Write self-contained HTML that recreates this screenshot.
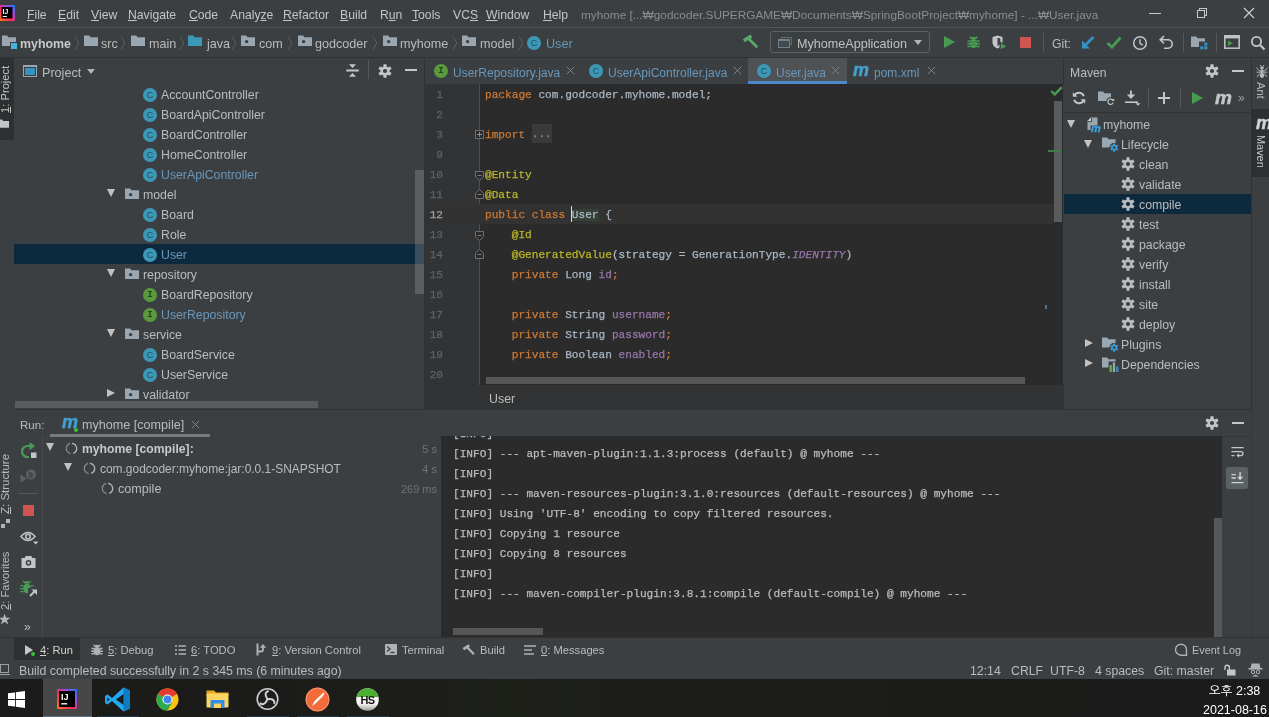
<!DOCTYPE html><html><head><meta charset="utf-8"><title>myhome - User.java</title><style>
*{box-sizing:border-box}
html,body{margin:0;padding:0}
body{width:1269px;height:717px;position:relative;overflow:hidden;background:#3c3f41;will-change:transform;font-family:"Liberation Sans","NanumGothic",sans-serif;font-size:12.3px;color:#bbbbbb;line-height:20px}
.a{position:absolute;white-space:nowrap}
.t{position:absolute;white-space:nowrap;height:20px;line-height:22px}
.mono{font-family:"Liberation Mono",monospace;font-size:11.13px;-webkit-text-stroke:0.250px currentColor}
.row{position:absolute;left:0;right:0;height:20px}
.ic{position:absolute;display:block}
.circ{position:absolute;width:14px;height:14px;border-radius:50%;font-family:"Liberation Sans",sans-serif;font-size:9px;text-align:center;line-height:14px;color:#1f4a5a}
.cc{background:#3d98b8}
.ci{background:#5a9a3c;color:#25401a}
.blue{color:#6897bb}
.kw{color:#cc7832}.an{color:#bbb529}.fd{color:#9876aa}.cd{color:#a9b7c6}
u{text-decoration:underline;text-underline-offset:1px}
</style></head><body>
<div class="a" style="left:0;top:0;width:1269px;height:27px;background:#3c3f41"></div>
<svg class="ic" style="left:-1px;top:5px" width="16" height="16" viewBox="0 0 16 16"><defs><linearGradient id="ijg" x1="0" y1="1" x2="1" y2="0"><stop offset="0" stop-color="#fc801d"/><stop offset=".4" stop-color="#fe2857"/><stop offset=".7" stop-color="#a34be0"/><stop offset="1" stop-color="#087cfa"/></linearGradient></defs><rect width="16" height="16" rx="1" fill="url(#ijg)"/><rect x="2.500" y="2" width="11" height="11.500" fill="#000"/><rect x="3.800" y="11" width="4" height="1" fill="#fff"/><text x="3.500" y="8.800" font-family="Liberation Sans" font-weight="bold" font-size="6.800" fill="#fff">IJ</text></svg>
<div class="t" style="left:27px;top:4px;font-size:12.2px;color:#c4c4c4"><u>F</u>ile</div>
<div class="t" style="left:58px;top:4px;font-size:12.2px;color:#c4c4c4"><u>E</u>dit</div>
<div class="t" style="left:91px;top:4px;font-size:12.2px;color:#c4c4c4"><u>V</u>iew</div>
<div class="t" style="left:128px;top:4px;font-size:12.2px;color:#c4c4c4"><u>N</u>avigate</div>
<div class="t" style="left:189px;top:4px;font-size:12.2px;color:#c4c4c4"><u>C</u>ode</div>
<div class="t" style="left:230px;top:4px;font-size:12.2px;color:#c4c4c4">Analy<u>z</u>e</div>
<div class="t" style="left:283px;top:4px;font-size:12.2px;color:#c4c4c4"><u>R</u>efactor</div>
<div class="t" style="left:340px;top:4px;font-size:12.2px;color:#c4c4c4"><u>B</u>uild</div>
<div class="t" style="left:380px;top:4px;font-size:12.2px;color:#c4c4c4">R<u>u</u>n</div>
<div class="t" style="left:412px;top:4px;font-size:12.2px;color:#c4c4c4"><u>T</u>ools</div>
<div class="t" style="left:453px;top:4px;font-size:12.2px;color:#c4c4c4">VC<u>S</u></div>
<div class="t" style="left:486px;top:4px;font-size:12.2px;color:#c4c4c4"><u>W</u>indow</div>
<div class="t" style="left:543px;top:4px;font-size:12.2px;color:#c4c4c4"><u>H</u>elp</div>
<div class="t" style="left:581px;top:4px;font-size:11.800px;color:#8a8c8d">myhome [...₩godcoder.SUPERGAME₩Documents₩SpringBootProject₩myhome] - ...₩User.java</div>
<div class="a" style="left:1149px;top:13px;width:12px;height:1px;background:#c8c8c8"></div>
<div class="a" style="left:1199px;top:8px;width:8px;height:8px;border:1px solid #c8c8c8"></div><div class="a" style="left:1197px;top:10px;width:8px;height:8px;border:1px solid #c8c8c8;background:#3c3f41"></div>
<svg class="ic" style="left:1243px;top:7px" width="12" height="12" viewBox="0 0 12 12"><path d="M1 1L11 11M11 1L1 11" stroke="#d0d0d0" stroke-width="1.1" fill="none"/></svg>
<div class="a" style="left:0;top:27px;width:1269px;height:1px;background:#515355"></div>
<svg class="ic" style="left:2px;top:35px" width="14" height="11" viewBox="0 0 14 11"><path d="M0 0.5h5.2l1.3 1.8H14V11H0z" fill="#9aa7b0"/></svg><div class="a" style="left:10px;top:42px;width:8px;height:8px;background:#40b6e0;border:1px solid #3c3f41"></div>
<div class="t" style="left:20px;top:33px;font-weight:bold;font-size:12.4px;color:#c8c8c8">myhome</div>
<svg class="ic" style="left:73.5px;top:36px" width="6" height="14" viewBox="0 0 6 14"><path d="M1 0.500L4.800 7L1 13.500" stroke="#5c5f61" stroke-width="1" fill="none"/></svg>
<svg class="ic" style="left:120px;top:36px" width="6" height="14" viewBox="0 0 6 14"><path d="M1 0.500L4.800 7L1 13.500" stroke="#5c5f61" stroke-width="1" fill="none"/></svg>
<svg class="ic" style="left:178.5px;top:36px" width="6" height="14" viewBox="0 0 6 14"><path d="M1 0.500L4.800 7L1 13.500" stroke="#5c5f61" stroke-width="1" fill="none"/></svg>
<svg class="ic" style="left:231px;top:36px" width="6" height="14" viewBox="0 0 6 14"><path d="M1 0.500L4.800 7L1 13.500" stroke="#5c5f61" stroke-width="1" fill="none"/></svg>
<svg class="ic" style="left:287px;top:36px" width="6" height="14" viewBox="0 0 6 14"><path d="M1 0.500L4.800 7L1 13.500" stroke="#5c5f61" stroke-width="1" fill="none"/></svg>
<svg class="ic" style="left:372px;top:36px" width="6" height="14" viewBox="0 0 6 14"><path d="M1 0.500L4.800 7L1 13.500" stroke="#5c5f61" stroke-width="1" fill="none"/></svg>
<svg class="ic" style="left:452px;top:36px" width="6" height="14" viewBox="0 0 6 14"><path d="M1 0.500L4.800 7L1 13.500" stroke="#5c5f61" stroke-width="1" fill="none"/></svg>
<svg class="ic" style="left:517.5px;top:36px" width="6" height="14" viewBox="0 0 6 14"><path d="M1 0.500L4.800 7L1 13.500" stroke="#5c5f61" stroke-width="1" fill="none"/></svg>
<svg class="ic" style="left:84px;top:35px" width="14" height="11" viewBox="0 0 14 11"><path d="M0 0.5h5.2l1.3 1.8H14V11H0z" fill="#9aa7b0"/></svg>
<div class="t" style="left:101px;top:33px;font-size:12.6px">src</div>
<svg class="ic" style="left:131px;top:35px" width="14" height="11" viewBox="0 0 14 11"><path d="M0 0.5h5.2l1.3 1.8H14V11H0z" fill="#9aa7b0"/></svg>
<div class="t" style="left:149px;top:33px;font-size:12.6px">main</div>
<svg class="ic" style="left:188px;top:35px" width="14" height="11" viewBox="0 0 14 11"><path d="M0 0.5h5.2l1.3 1.8H14V11H0z" fill="#3d98b8"/></svg>
<div class="t" style="left:207px;top:33px;font-size:12.6px">java</div>
<svg class="ic" style="left:241px;top:35px" width="14" height="11" viewBox="0 0 14 11"><path d="M0 0.5h5.2l1.3 1.8H14V11H0z" fill="#9aa7b0"/><circle cx="5.6" cy="6.6" r="1.7" fill="#3c3f41"/></svg>
<div class="t" style="left:259px;top:33px;font-size:12.6px">com</div>
<svg class="ic" style="left:298px;top:35px" width="14" height="11" viewBox="0 0 14 11"><path d="M0 0.5h5.2l1.3 1.8H14V11H0z" fill="#9aa7b0"/><circle cx="5.6" cy="6.6" r="1.7" fill="#3c3f41"/></svg>
<div class="t" style="left:315px;top:33px;font-size:12.6px">godcoder</div>
<svg class="ic" style="left:383px;top:35px" width="14" height="11" viewBox="0 0 14 11"><path d="M0 0.5h5.2l1.3 1.8H14V11H0z" fill="#9aa7b0"/><circle cx="5.6" cy="6.6" r="1.7" fill="#3c3f41"/></svg>
<div class="t" style="left:400px;top:33px;font-size:12.6px">myhome</div>
<svg class="ic" style="left:462px;top:35px" width="14" height="11" viewBox="0 0 14 11"><path d="M0 0.5h5.2l1.3 1.8H14V11H0z" fill="#9aa7b0"/><circle cx="5.6" cy="6.6" r="1.7" fill="#3c3f41"/></svg>
<div class="t" style="left:480px;top:33px;font-size:12.6px">model</div>
<div class="circ cc" style="left:527px;top:36px">C</div>
<div class="t blue" style="left:546px;top:33px;font-size:12.6px">User</div>
<svg class="ic" style="left:742px;top:33px" width="18" height="18" viewBox="0 0 18 18"><path d="M1.800 7.800L9.400 3" stroke="#59a869" stroke-width="3.600"/><path d="M6.200 5.200L15.300 14.300" stroke="#59a869" stroke-width="2.800"/></svg>
<div class="a" style="left:770px;top:31px;width:160px;height:22px;border:1px solid #5e6163;border-radius:3px"></div>
<div class="a" style="left:781px;top:37px;width:11px;height:8px;border:1px solid #5d6f73;background:#3c3f41"></div><div class="a" style="left:778px;top:39px;width:12px;height:9px;border:1px solid #6e8388;border-top-width:2px;background:#3f4a4d"></div>
<div class="t" style="left:797px;top:33px;font-size:12.6px;color:#c0c0c0">MyhomeApplication</div>
<div class="a" style="left:914px;top:40px;width:0;height:0;border-left:4.5px solid transparent;border-right:4.5px solid transparent;border-top:5px solid #b4b4b4"></div>
<div class="a" style="left:944px;top:36px;width:0;height:0;border-top:6.5px solid transparent;border-bottom:6.5px solid transparent;border-left:11px solid #499c54"></div>
<svg class="ic" style="left:967px;top:36px" width="13" height="13" viewBox="0 0 15 15"><g fill="#499c54"><ellipse cx="7.500" cy="8.800" rx="4.300" ry="5.200"/><path d="M4.300 3.800a3.200 2.800 0 0 1 6.400 0z"/><path d="M0.600 4.800h3.600v1.900h-3.600zM10.800 4.800h3.600v1.900h-3.600zM0.200 8h3.600v1.900H0.200zM11.200 8h3.600v1.900h-3.600zM0.600 11.200h3.600v1.900h-3.600zM10.800 11.200h3.600v1.900h-3.600zM3.800 0.300l2 2.200-1.200 1-2-2.200zM11.200 0.300l-2 2.200 1.200 1 2-2.200z"/></g><path d="M4 6.700h7v0.900H4zM4 9.700h7v0.900H4z" fill="#3c3f41" opacity=".6"/></svg>
<svg class="ic" style="left:992px;top:35px" width="17" height="17" viewBox="0 0 17 17"><path d="M0.500 2L5.500 0.500L10.500 2V8q-0.500 3.500-5 5.500Q1 11.500 0.500 8z" fill="#c3c6c8"/><path d="M5.500 2.800L8.300 3.600V8q-0.300 1.800-2.800 3.200z" fill="#3c3f41"/><path d="M7.500 6.300l8.500 4.800-8.500 4.900z" fill="#3c3f41"/><path d="M8.800 8.200l5.500 3-5.500 3.100z" fill="#499c54"/></svg>
<div class="a" style="left:1020px;top:37px;width:11px;height:11px;background:#cf5551"></div>
<div class="a" style="left:1043px;top:33px;width:1px;height:19px;background:#555759"></div>
<div class="t" style="left:1052px;top:33px;font-size:12.200px">Git:</div>
<svg class="ic" style="left:1081px;top:36px" width="14" height="13" viewBox="0 0 14 13"><path d="M12.500 1L4.500 9" stroke="#3592c4" stroke-width="2.600" fill="none"/><path d="M1 4.500V12.500H9z" fill="#3592c4"/></svg>
<svg class="ic" style="left:1106px;top:36px" width="16" height="13" viewBox="0 0 16 13"><path d="M1.5 7L6 11.2L14.5 1.5" stroke="#499c54" stroke-width="2.700" fill="none"/></svg>
<svg class="ic" style="left:1132px;top:35px" width="16" height="16" viewBox="0 0 16 16"><circle cx="8" cy="8" r="6.3" stroke="#c3c6c8" stroke-width="1.5" fill="none"/><path d="M8 4.2V8.3l2.8 1.8" stroke="#c3c6c8" stroke-width="1.4" fill="none"/></svg>
<svg class="ic" style="left:1159px;top:35px" width="15" height="15" viewBox="0 0 15 15"><path d="M1.5 4.8H9a4.2 4.2 0 0 1 0 8.4H5" stroke="#c3c6c8" stroke-width="1.6" fill="none"/><path d="M5 1.2L1.2 4.8L5 8.4" stroke="#c3c6c8" stroke-width="1.6" fill="none"/></svg>
<div class="a" style="left:1183px;top:33px;width:1px;height:19px;background:#555759"></div>
<svg class="ic" style="left:1191px;top:36px" width="17" height="14" viewBox="0 0 17 14"><path d="M0 0.5h5.2l1.3 1.8H14V11H0z" fill="#9aa7b0"/><rect x="8" y="5.5" width="9" height="8.5" fill="#3c3f41"/><rect x="9.3" y="10.3" width="3" height="3" fill="#3592c4"/><rect x="13.3" y="10.3" width="3" height="3" fill="#3592c4"/><rect x="13.3" y="6.6" width="3" height="3" fill="#3592c4"/></svg>
<div class="a" style="left:1216px;top:33px;width:1px;height:19px;background:#555759"></div>
<svg class="ic" style="left:1224px;top:35px" width="16" height="14" viewBox="0 0 16 14"><rect x="0.8" y="0.8" width="14.4" height="12.4" fill="none" stroke="#c3c6c8" stroke-width="1.5"/><rect x="0.8" y="0.8" width="14.4" height="2.6" fill="#c3c6c8"/><path d="M4 5.6l4.6 2.7L4 11z" fill="#499c54"/></svg>
<svg class="ic" style="left:1250px;top:35px" width="16" height="16" viewBox="0 0 16 16"><circle cx="6.5" cy="6.5" r="4.6" stroke="#c3c6c8" stroke-width="1.8" fill="none"/><path d="M9.8 9.8L14.5 14.5" stroke="#c3c6c8" stroke-width="2.2"/></svg>
<div class="a" style="left:0;top:57px;width:1269px;height:1px;background:#323232"></div>
<div class="a" style="left:0;top:58px;width:14px;height:582px;background:#3c3f41"></div>
<div class="a" style="left:0;top:58px;width:14px;height:82px;background:#2d2f30"></div>
<div class="a" style="left:-2px;top:113px;transform-origin:0 0;transform:rotate(-90deg);font-size:11.2px;line-height:14px;height:14px;color:#c4c4c4"><u>1</u>: Project</div>
<svg class="ic" style="left:-2px;top:119px" width="11" height="9" viewBox="0 0 14 11"><path d="M0 0.500h5.200l1.300 1.800H14V11H0z" fill="#c0c4c6"/></svg>
<div class="a" style="left:-2px;top:514px;transform-origin:0 0;transform:rotate(-90deg);font-size:11.5px;line-height:14px;height:14px;color:#bbbbbb"><u>Z</u>: Structure</div>
<div class="a" style="left:1px;top:524px;width:4px;height:4px;background:#aeb4b8"></div><div class="a" style="left:6px;top:519px;width:4px;height:4px;background:#aeb4b8"></div>
<div class="a" style="left:-2px;top:610px;transform-origin:0 0;transform:rotate(-90deg);font-size:11.2px;line-height:14px;height:14px;color:#bbbbbb"><u>2</u>: Favorites</div>
<div class="a" style="left:-2px;top:609px;font-size:14px;color:#b4b8ba;line-height:20px">★</div>
<div class="a" style="left:14px;top:58px;width:410px;height:351px;background:#3c3f41"></div>
<div class="a" style="left:23px;top:65px;width:14px;height:12px;border:1px solid #9aa7b0;border-top-width:2px;background:#3592c4;box-shadow:inset 0 0 0 1px #3c3f41"></div>
<div class="t" style="left:42px;top:62px;font-size:12.6px">Project</div>
<div class="a" style="left:87px;top:69px;width:0;height:0;border-left:4.5px solid transparent;border-right:4.5px solid transparent;border-top:5px solid #b4b4b4"></div>
<svg class="ic" style="left:346px;top:64px" width="13" height="13" viewBox="0 0 13 13"><path d="M3 0.300h7l-3.500 3.700zM3 12.700h7l-3.500-3.700z" fill="#c3c6c8"/><rect x="0.300" y="5.500" width="12.400" height="2" fill="#c3c6c8"/></svg>
<div class="a" style="left:368px;top:60px;width:1px;height:19px;background:#555759"></div>
<svg class="ic" style="left:378px;top:63.5px" width="14" height="14" viewBox="0 0 14 14"><g fill="#c3c6c8"><circle cx="7" cy="7" r="4.6"/><g><rect x="5.400" y="0.300" width="3.200" height="13.400" rx=".4"/></g><rect x="5.400" y="0.300" width="3.200" height="13.400" rx=".4" transform="rotate(60 7 7)"/><rect x="5.400" y="0.300" width="3.200" height="13.400" rx=".4" transform="rotate(120 7 7)"/></g><circle cx="7" cy="7" r="2.1" fill="#3c3f41"/></svg>
<div class="a" style="left:405px;top:69px;width:12px;height:2px;background:#c3c6c8"></div>
<div class="a" style="left:14px;top:244px;width:410px;height:20px;background:#0d293e"></div>
<div class="circ cc" style="left:143px;top:88px">C</div>
<div class="t" style="left:161px;top:84px;font-size:12.3px">AccountController</div>
<div class="circ cc" style="left:143px;top:108px">C</div>
<div class="t" style="left:161px;top:104px;font-size:12.3px">BoardApiController</div>
<div class="circ cc" style="left:143px;top:128px">C</div>
<div class="t" style="left:161px;top:124px;font-size:12.3px">BoardController</div>
<div class="circ cc" style="left:143px;top:148px">C</div>
<div class="t" style="left:161px;top:144px;font-size:12.3px">HomeController</div>
<div class="circ cc" style="left:143px;top:168px">C</div>
<div class="t blue" style="left:161px;top:164px;font-size:12.3px">UserApiController</div>
<div class="a" style="left:107px;top:189px;width:0;height:0;border-left:4.500px solid transparent;border-right:4.500px solid transparent;border-top:8px solid #c2c2c2"></div>
<svg class="ic" style="left:125px;top:188px" width="14" height="11" viewBox="0 0 14 11"><path d="M0 0.5h5.2l1.3 1.8H14V11H0z" fill="#9aa7b0"/><circle cx="5.6" cy="6.6" r="1.7" fill="#3c3f41"/></svg>
<div class="t" style="left:143px;top:184px;font-size:12.3px">model</div>
<div class="circ cc" style="left:143px;top:208px">C</div>
<div class="t" style="left:161px;top:204px;font-size:12.3px">Board</div>
<div class="circ cc" style="left:143px;top:228px">C</div>
<div class="t" style="left:161px;top:224px;font-size:12.3px">Role</div>
<div class="circ cc" style="left:143px;top:248px">C</div>
<div class="t blue" style="left:161px;top:244px;font-size:12.3px">User</div>
<div class="a" style="left:107px;top:269px;width:0;height:0;border-left:4.500px solid transparent;border-right:4.500px solid transparent;border-top:8px solid #c2c2c2"></div>
<svg class="ic" style="left:125px;top:268px" width="14" height="11" viewBox="0 0 14 11"><path d="M0 0.5h5.2l1.3 1.8H14V11H0z" fill="#9aa7b0"/><circle cx="5.6" cy="6.6" r="1.7" fill="#3c3f41"/></svg>
<div class="t" style="left:143px;top:264px;font-size:12.3px">repository</div>
<div class="circ ci" style="left:143px;top:288px;font-family:'Liberation Mono',monospace;font-weight:bold">I</div>
<div class="t" style="left:161px;top:284px;font-size:12.3px">BoardRepository</div>
<div class="circ ci" style="left:143px;top:308px;font-family:'Liberation Mono',monospace;font-weight:bold">I</div>
<div class="t blue" style="left:161px;top:304px;font-size:12.3px">UserRepository</div>
<div class="a" style="left:107px;top:329px;width:0;height:0;border-left:4.500px solid transparent;border-right:4.500px solid transparent;border-top:8px solid #c2c2c2"></div>
<svg class="ic" style="left:125px;top:328px" width="14" height="11" viewBox="0 0 14 11"><path d="M0 0.5h5.2l1.3 1.8H14V11H0z" fill="#9aa7b0"/><circle cx="5.6" cy="6.6" r="1.7" fill="#3c3f41"/></svg>
<div class="t" style="left:143px;top:324px;font-size:12.3px">service</div>
<div class="circ cc" style="left:143px;top:348px">C</div>
<div class="t" style="left:161px;top:344px;font-size:12.3px">BoardService</div>
<div class="circ cc" style="left:143px;top:368px">C</div>
<div class="t" style="left:161px;top:364px;font-size:12.3px">UserService</div>
<div class="a" style="left:107px;top:388.5px;width:0;height:0;border-top:4.500px solid transparent;border-bottom:4.500px solid transparent;border-left:8px solid #c2c2c2"></div>
<svg class="ic" style="left:125px;top:388px" width="14" height="11" viewBox="0 0 14 11"><path d="M0 0.5h5.2l1.3 1.8H14V11H0z" fill="#9aa7b0"/><circle cx="5.6" cy="6.6" r="1.7" fill="#3c3f41"/></svg>
<div class="t" style="left:143px;top:384px;font-size:12.3px">validator</div>
<div class="a" style="left:14px;top:400px;width:410px;height:9px;background:#3c3f41"></div>
<div class="a" style="left:15px;top:401px;width:303px;height:7px;background:#595b5d"></div>
<div class="a" style="left:415px;top:170px;width:9px;height:124px;background:rgba(175,178,182,0.27)"></div>
<div class="a" style="left:424px;top:58px;width:1px;height:351px;background:#323232"></div>
<div class="a" style="left:425px;top:58px;width:638px;height:26px;background:#3c3f41"></div>
<div class="a" style="left:748px;top:58px;width:99px;height:26px;background:#4e5254"></div>
<div class="a" style="left:748px;top:81px;width:99px;height:3px;background:#4a88c7"></div>
<div class="circ ci" style="left:434px;top:64px;font-family:'Liberation Mono',monospace;font-weight:bold">I</div>
<div class="t blue" style="left:453px;top:62px;font-size:12px">UserRepository.java</div><svg class="ic" style="left:566px;top:66px" width="9" height="9" viewBox="0 0 9 9"><path d="M0.8 0.8L8.2 8.2M8.2 0.8L0.8 8.2" stroke="#7f8385" stroke-width="1" fill="none"/></svg>
<div class="circ cc" style="left:589px;top:64px">C</div>
<div class="t blue" style="left:608px;top:62px;font-size:12px">UserApiController.java</div><svg class="ic" style="left:733px;top:66px" width="9" height="9" viewBox="0 0 9 9"><path d="M0.8 0.8L8.2 8.2M8.2 0.8L0.8 8.2" stroke="#7f8385" stroke-width="1" fill="none"/></svg>
<div class="circ cc" style="left:757px;top:64px">C</div>
<div class="t blue" style="left:776px;top:62px;font-size:12px">User.java</div><svg class="ic" style="left:831px;top:66px" width="9" height="9" viewBox="0 0 9 9"><path d="M0.8 0.8L8.2 8.2M8.2 0.8L0.8 8.2" stroke="#7f8385" stroke-width="1" fill="none"/></svg>
<div class="a" style="left:853px;top:61px;font-family:'Liberation Sans',sans-serif;font-weight:bold;font-style:italic;font-size:18px;line-height:18px;color:#43a0cc;letter-spacing:-0.5px;-webkit-text-stroke:0.500px #43a0cc">m</div>
<div class="t blue" style="left:874px;top:62px;font-size:12px">pom.xml</div><svg class="ic" style="left:927px;top:66px" width="9" height="9" viewBox="0 0 9 9"><path d="M0.8 0.8L8.2 8.2M8.2 0.8L0.8 8.2" stroke="#7f8385" stroke-width="1" fill="none"/></svg>
<div class="a" style="left:425px;top:84px;width:638px;height:301px;background:#2b2b2b;overflow:hidden" id="ed">
<div class="a" style="left:0;top:0;width:54px;height:301px;background:#313335"></div>
<div class="a" style="left:54px;top:0;width:1px;height:301px;background:#4b4d4f"></div>
<div class="a" style="left:0;top:120px;width:629px;height:20px;background:#323232"></div>
<div class="t mono" style="left:0;width:18px;text-align:right;top:0px;color:#606366">1</div>
<div class="t mono cd" style="left:60px;top:0px;white-space:pre"><span class="kw">package </span>com.godcoder.myhome.model;</div>
<div class="t mono" style="left:0;width:18px;text-align:right;top:20px;color:#606366">2</div>
<div class="t mono" style="left:0;width:18px;text-align:right;top:40px;color:#606366">3</div>
<div class="t mono cd" style="left:60px;top:40px;white-space:pre"><span class="kw">import </span><span style="display:inline-block;height:19px;line-height:21px;vertical-align:top;background:#3a3a3a;color:#8c8c8c">...</span></div>
<div class="t mono" style="left:0;width:18px;text-align:right;top:60px;color:#606366">9</div>
<div class="t mono" style="left:0;width:18px;text-align:right;top:80px;color:#606366">10</div>
<div class="t mono cd" style="left:60px;top:80px;white-space:pre"><span class="an">@Entity</span></div>
<div class="t mono" style="left:0;width:18px;text-align:right;top:100px;color:#606366">11</div>
<div class="t mono cd" style="left:60px;top:100px;white-space:pre"><span class="an">@Data</span></div>
<div class="t mono" style="left:0;width:18px;text-align:right;top:120px;color:#a4a3a3">12</div>
<div class="t mono cd" style="left:60px;top:120px;white-space:pre"><span class="kw">public class </span><span style="background:#344134">User</span> {</div>
<div class="t mono" style="left:0;width:18px;text-align:right;top:140px;color:#606366">13</div>
<div class="t mono cd" style="left:60px;top:140px;white-space:pre">    <span class="an">@Id</span></div>
<div class="t mono" style="left:0;width:18px;text-align:right;top:160px;color:#606366">14</div>
<div class="t mono cd" style="left:60px;top:160px;white-space:pre">    <span class="an">@GeneratedValue</span>(strategy = GenerationType.<span class="fd" style="font-style:italic">IDENTITY</span>)</div>
<div class="t mono" style="left:0;width:18px;text-align:right;top:180px;color:#606366">15</div>
<div class="t mono cd" style="left:60px;top:180px;white-space:pre">    <span class="kw">private </span>Long <span class="fd">id</span><span class="kw">;</span></div>
<div class="t mono" style="left:0;width:18px;text-align:right;top:200px;color:#606366">16</div>
<div class="t mono" style="left:0;width:18px;text-align:right;top:220px;color:#606366">17</div>
<div class="t mono cd" style="left:60px;top:220px;white-space:pre">    <span class="kw">private </span>String <span class="fd">username</span><span class="kw">;</span></div>
<div class="t mono" style="left:0;width:18px;text-align:right;top:240px;color:#606366">18</div>
<div class="t mono cd" style="left:60px;top:240px;white-space:pre">    <span class="kw">private </span>String <span class="fd">password</span><span class="kw">;</span></div>
<div class="t mono" style="left:0;width:18px;text-align:right;top:260px;color:#606366">19</div>
<div class="t mono cd" style="left:60px;top:260px;white-space:pre">    <span class="kw">private </span>Boolean <span class="fd">enabled</span><span class="kw">;</span></div>
<div class="t mono" style="left:0;width:18px;text-align:right;top:280px;color:#606366">20</div>
<div class="a" style="left:146px;top:122px;width:1px;height:16px;background:#dddddd"></div>
<div class="a" style="left:50px;top:46px;width:9px;height:9px;border:1px solid #6c6f71;background:#2b2b2b"></div><div class="a" style="left:52px;top:50px;width:5px;height:1px;background:#8c8f91"></div><div class="a" style="left:54px;top:48px;width:1px;height:5px;background:#8c8f91"></div>
<svg class="ic" style="left:50px;top:87px" width="9" height="10" viewBox="0 0 9 10"><path d="M0.5 0.5V6L4.5 9.4L8.5 6V0.5z" fill="#2b2b2b" stroke="#6c6f71"/><path d="M2.5 4.5h4" stroke="#7c7f81"/></svg>
<svg class="ic" style="left:50px;top:105px" width="9" height="10" viewBox="0 0 9 10"><path d="M0.5 9.5V4L4.5 0.6L8.5 4V9.5z" fill="#2b2b2b" stroke="#6c6f71"/><path d="M2.5 5.5h4" stroke="#7c7f81"/></svg>
<svg class="ic" style="left:50px;top:147px" width="9" height="10" viewBox="0 0 9 10"><path d="M0.5 0.5V6L4.5 9.4L8.5 6V0.5z" fill="#2b2b2b" stroke="#6c6f71"/><path d="M2.5 4.5h4" stroke="#7c7f81"/></svg>
<svg class="ic" style="left:50px;top:165px" width="9" height="10" viewBox="0 0 9 10"><path d="M0.5 9.5V4L4.5 0.6L8.5 4V9.5z" fill="#2b2b2b" stroke="#6c6f71"/><path d="M2.5 5.5h4" stroke="#7c7f81"/></svg>
<svg class="ic" style="left:625px;top:2px" width="13" height="10" viewBox="0 0 13 10"><path d="M1.200 5L4.800 8.400L11.800 1.200" stroke="#499c54" stroke-width="2.400" fill="none"/></svg>
<div class="a" style="left:629px;top:17px;width:8px;height:121px;background:#595b5d"></div>
<div class="a" style="left:623px;top:66px;width:13px;height:2px;background:#3f7a4a"></div>
<div class="a" style="left:620px;top:221px;width:2px;height:4px;background:#4a6f98"></div>
<div class="a" style="left:61px;top:293px;width:539px;height:7px;background:#555759"></div>
</div>
<div class="a" style="left:425px;top:385px;width:639px;height:24px;background:#313335"></div>
<div class="t" style="left:489px;top:388px;font-size:12.4px">User</div>
<div class="a" style="left:1063px;top:58px;width:1px;height:26px;background:#323232"></div>
<div class="a" style="left:1064px;top:58px;width:187px;height:351px;background:#3c3f41"></div>
<div class="t" style="left:1070px;top:62px;font-size:12.200px">Maven</div>
<svg class="ic" style="left:1205px;top:63.5px" width="14" height="14" viewBox="0 0 14 14"><g fill="#c3c6c8"><circle cx="7" cy="7" r="4.6"/><g><rect x="5.400" y="0.300" width="3.200" height="13.400" rx=".4"/></g><rect x="5.400" y="0.300" width="3.200" height="13.400" rx=".4" transform="rotate(60 7 7)"/><rect x="5.400" y="0.300" width="3.200" height="13.400" rx=".4" transform="rotate(120 7 7)"/></g><circle cx="7" cy="7" r="2.1" fill="#3c3f41"/></svg>
<div class="a" style="left:1232px;top:69.500px;width:12px;height:2px;background:#c3c6c8"></div>
<svg class="ic" style="left:1072px;top:91px" width="14" height="14" viewBox="0 0 14 14"><path d="M11.8 5.2A5 5 0 0 0 2.6 4.4M2.2 8.8A5 5 0 0 0 11.4 9.6" stroke="#c3c6c8" stroke-width="2" fill="none"/><path d="M0.800 1.200v4.600h4.600zM13.200 12.800v-4.600h-4.600z" fill="#c3c6c8"/></svg>
<svg class="ic" style="left:1098px;top:91px" width="17" height="15" viewBox="0 0 17 15"><path d="M0 0.5h5.2l1.3 1.8H13V10H0z" fill="#9aa7b0"/><circle cx="12.5" cy="10.5" r="4.2" fill="#3c3f41"/><path d="M15 9.4a2.7 2.7 0 1 0 0.2 2.2" stroke="#c3c6c8" stroke-width="1.2" fill="none"/><path d="M16.2 7.4v2.6h-2.6z" fill="#c3c6c8"/></svg>
<svg class="ic" style="left:1124px;top:90px" width="17" height="16" viewBox="0 0 17 16"><path d="M7 0.5V7" stroke="#c3c6c8" stroke-width="1.8"/><path d="M2.8 4.5L7 9L11.2 4.5z" fill="#c3c6c8"/><path d="M1 12.2h13" stroke="#c3c6c8" stroke-width="1.6"/><path d="M11.5 13.2h5L14 15.8z" fill="#c3c6c8"/></svg>
<div class="a" style="left:1148px;top:88px;width:1px;height:20px;background:#555759"></div>
<div class="a" style="left:1158px;top:97px;width:12px;height:2px;background:#c3c6c8"></div><div class="a" style="left:1163px;top:92px;width:2px;height:12px;background:#c3c6c8"></div>
<div class="a" style="left:1180px;top:88px;width:1px;height:20px;background:#555759"></div>
<div class="a" style="left:1192px;top:92px;width:0;height:0;border-top:6.5px solid transparent;border-bottom:6.5px solid transparent;border-left:11px solid #499c54"></div>
<div class="a" style="left:1215px;top:88px;font-family:'Liberation Sans',sans-serif;font-weight:bold;font-style:italic;font-size:19px;line-height:19px;color:#c3c6c8;letter-spacing:-0.5px;-webkit-text-stroke:0.500px #c3c6c8">m</div>
<div class="a" style="left:1238px;top:88px;font-size:12px;color:#9da0a2;line-height:20px">»</div>
<div class="a" style="left:1064px;top:112px;width:187px;height:1px;background:#323232"></div>
<div class="a" style="left:1064px;top:194px;width:187px;height:20px;background:#0d293e"></div>
<div class="a" style="left:1067px;top:119.5px;width:0;height:0;border-left:4.500px solid transparent;border-right:4.500px solid transparent;border-top:8px solid #c2c2c2"></div>
<svg class="ic" style="left:1087px;top:117px" width="15" height="16" viewBox="0 0 15 16"><path d="M4 0.500H10.500V13H0.500V4z" fill="#9aa7b0"/><path d="M4 0.500V4H0.500z" fill="#c9d0d5"/><path d="M4.600 1v3.600H1" stroke="#3c3f41" stroke-width=".9" fill="none"/><rect x="3.500" y="8.500" width="11.500" height="7.500" fill="#3c3f41"/></svg>
<div class="a" style="left:1091px;top:122.5px;font-family:'Liberation Sans',sans-serif;font-weight:bold;font-style:italic;font-size:11px;line-height:11px;color:#3aa0d8;letter-spacing:-0.5px;-webkit-text-stroke:0.500px #3aa0d8">m</div>
<div class="t" style="left:1103px;top:114px;font-size:12.3px">myhome</div>
<div class="a" style="left:1084px;top:139.5px;width:0;height:0;border-left:4.500px solid transparent;border-right:4.500px solid transparent;border-top:8px solid #c2c2c2"></div>
<svg class="ic" style="left:1102px;top:137px" width="17" height="15" viewBox="0 0 17 15"><path d="M0 0.5h5.2l1.3 1.8H13.5V10.5H0z" fill="#9aa7b0"/><circle cx="12.200" cy="10.600" r="4.800" fill="#3c3f41"/><g fill="#3a9ad6"><circle cx="12.200" cy="10.600" r="3"/><rect x="11.200" y="6.400" width="2" height="8.400"/><rect x="11.200" y="6.400" width="2" height="8.400" transform="rotate(60 12.200 10.600)"/><rect x="11.200" y="6.400" width="2" height="8.400" transform="rotate(120 12.200 10.600)"/></g><circle cx="12.200" cy="10.600" r="1.300" fill="#3c3f41"/></svg>
<div class="t" style="left:1121px;top:134px;font-size:12.3px">Lifecycle</div>
<svg class="ic" style="left:1121px;top:157px" width="14" height="14" viewBox="0 0 14 14"><g fill="#b8bcbe"><circle cx="7" cy="7" r="4.6"/><g><rect x="5.400" y="0.300" width="3.200" height="13.400" rx=".4"/></g><rect x="5.400" y="0.300" width="3.200" height="13.400" rx=".4" transform="rotate(60 7 7)"/><rect x="5.400" y="0.300" width="3.200" height="13.400" rx=".4" transform="rotate(120 7 7)"/></g><circle cx="7" cy="7" r="2.1" fill="#3c3f41"/></svg>
<div class="t" style="left:1139px;top:154px;font-size:12.3px">clean</div>
<svg class="ic" style="left:1121px;top:177px" width="14" height="14" viewBox="0 0 14 14"><g fill="#b8bcbe"><circle cx="7" cy="7" r="4.6"/><g><rect x="5.400" y="0.300" width="3.200" height="13.400" rx=".4"/></g><rect x="5.400" y="0.300" width="3.200" height="13.400" rx=".4" transform="rotate(60 7 7)"/><rect x="5.400" y="0.300" width="3.200" height="13.400" rx=".4" transform="rotate(120 7 7)"/></g><circle cx="7" cy="7" r="2.1" fill="#3c3f41"/></svg>
<div class="t" style="left:1139px;top:174px;font-size:12.3px">validate</div>
<svg class="ic" style="left:1121px;top:197px" width="14" height="14" viewBox="0 0 14 14"><g fill="#b8bcbe"><circle cx="7" cy="7" r="4.6"/><g><rect x="5.400" y="0.300" width="3.200" height="13.400" rx=".4"/></g><rect x="5.400" y="0.300" width="3.200" height="13.400" rx=".4" transform="rotate(60 7 7)"/><rect x="5.400" y="0.300" width="3.200" height="13.400" rx=".4" transform="rotate(120 7 7)"/></g><circle cx="7" cy="7" r="2.1" fill="#0d293e"/></svg>
<div class="t" style="left:1139px;top:194px;font-size:12.3px">compile</div>
<svg class="ic" style="left:1121px;top:217px" width="14" height="14" viewBox="0 0 14 14"><g fill="#b8bcbe"><circle cx="7" cy="7" r="4.6"/><g><rect x="5.400" y="0.300" width="3.200" height="13.400" rx=".4"/></g><rect x="5.400" y="0.300" width="3.200" height="13.400" rx=".4" transform="rotate(60 7 7)"/><rect x="5.400" y="0.300" width="3.200" height="13.400" rx=".4" transform="rotate(120 7 7)"/></g><circle cx="7" cy="7" r="2.1" fill="#3c3f41"/></svg>
<div class="t" style="left:1139px;top:214px;font-size:12.3px">test</div>
<svg class="ic" style="left:1121px;top:237px" width="14" height="14" viewBox="0 0 14 14"><g fill="#b8bcbe"><circle cx="7" cy="7" r="4.6"/><g><rect x="5.400" y="0.300" width="3.200" height="13.400" rx=".4"/></g><rect x="5.400" y="0.300" width="3.200" height="13.400" rx=".4" transform="rotate(60 7 7)"/><rect x="5.400" y="0.300" width="3.200" height="13.400" rx=".4" transform="rotate(120 7 7)"/></g><circle cx="7" cy="7" r="2.1" fill="#3c3f41"/></svg>
<div class="t" style="left:1139px;top:234px;font-size:12.3px">package</div>
<svg class="ic" style="left:1121px;top:257px" width="14" height="14" viewBox="0 0 14 14"><g fill="#b8bcbe"><circle cx="7" cy="7" r="4.6"/><g><rect x="5.400" y="0.300" width="3.200" height="13.400" rx=".4"/></g><rect x="5.400" y="0.300" width="3.200" height="13.400" rx=".4" transform="rotate(60 7 7)"/><rect x="5.400" y="0.300" width="3.200" height="13.400" rx=".4" transform="rotate(120 7 7)"/></g><circle cx="7" cy="7" r="2.1" fill="#3c3f41"/></svg>
<div class="t" style="left:1139px;top:254px;font-size:12.3px">verify</div>
<svg class="ic" style="left:1121px;top:277px" width="14" height="14" viewBox="0 0 14 14"><g fill="#b8bcbe"><circle cx="7" cy="7" r="4.6"/><g><rect x="5.400" y="0.300" width="3.200" height="13.400" rx=".4"/></g><rect x="5.400" y="0.300" width="3.200" height="13.400" rx=".4" transform="rotate(60 7 7)"/><rect x="5.400" y="0.300" width="3.200" height="13.400" rx=".4" transform="rotate(120 7 7)"/></g><circle cx="7" cy="7" r="2.1" fill="#3c3f41"/></svg>
<div class="t" style="left:1139px;top:274px;font-size:12.3px">install</div>
<svg class="ic" style="left:1121px;top:297px" width="14" height="14" viewBox="0 0 14 14"><g fill="#b8bcbe"><circle cx="7" cy="7" r="4.6"/><g><rect x="5.400" y="0.300" width="3.200" height="13.400" rx=".4"/></g><rect x="5.400" y="0.300" width="3.200" height="13.400" rx=".4" transform="rotate(60 7 7)"/><rect x="5.400" y="0.300" width="3.200" height="13.400" rx=".4" transform="rotate(120 7 7)"/></g><circle cx="7" cy="7" r="2.1" fill="#3c3f41"/></svg>
<div class="t" style="left:1139px;top:294px;font-size:12.3px">site</div>
<svg class="ic" style="left:1121px;top:317px" width="14" height="14" viewBox="0 0 14 14"><g fill="#b8bcbe"><circle cx="7" cy="7" r="4.6"/><g><rect x="5.400" y="0.300" width="3.200" height="13.400" rx=".4"/></g><rect x="5.400" y="0.300" width="3.200" height="13.400" rx=".4" transform="rotate(60 7 7)"/><rect x="5.400" y="0.300" width="3.200" height="13.400" rx=".4" transform="rotate(120 7 7)"/></g><circle cx="7" cy="7" r="2.1" fill="#3c3f41"/></svg>
<div class="t" style="left:1139px;top:314px;font-size:12.3px">deploy</div>
<div class="a" style="left:1085px;top:339px;width:0;height:0;border-top:4.500px solid transparent;border-bottom:4.500px solid transparent;border-left:8px solid #c2c2c2"></div>
<svg class="ic" style="left:1102px;top:337px" width="17" height="15" viewBox="0 0 17 15"><path d="M0 0.5h5.2l1.3 1.8H13.5V10.5H0z" fill="#9aa7b0"/><circle cx="12.200" cy="10.600" r="4.800" fill="#3c3f41"/><g fill="#3a9ad6"><circle cx="12.200" cy="10.600" r="3"/><rect x="11.200" y="6.400" width="2" height="8.400"/><rect x="11.200" y="6.400" width="2" height="8.400" transform="rotate(60 12.200 10.600)"/><rect x="11.200" y="6.400" width="2" height="8.400" transform="rotate(120 12.200 10.600)"/></g><circle cx="12.200" cy="10.600" r="1.300" fill="#3c3f41"/></svg>
<div class="t" style="left:1121px;top:334px;font-size:12.3px">Plugins</div>
<div class="a" style="left:1085px;top:359px;width:0;height:0;border-top:4.500px solid transparent;border-bottom:4.500px solid transparent;border-left:8px solid #c2c2c2"></div>
<svg class="ic" style="left:1102px;top:357px" width="17" height="15" viewBox="0 0 17 15"><path d="M0 0.5h5.2l1.3 1.8H13.5V10.5H0z" fill="#9aa7b0"/><rect x="6.5" y="4.5" width="10.5" height="10.5" fill="#3c3f41"/><rect x="7.5" y="8" width="2.3" height="7" fill="#62b543"/><rect x="10.8" y="5.5" width="2.3" height="9.5" fill="#9aa7b0"/><rect x="14.1" y="9.5" width="2.3" height="5.5" fill="#3592c4"/></svg>
<div class="t" style="left:1121px;top:354px;font-size:12.3px">Dependencies</div>
<div class="a" style="left:1251px;top:58px;width:18px;height:582px;background:#3c3f41"></div>
<div class="a" style="left:1251px;top:58px;width:1px;height:351px;background:#323232"></div>
<div class="a" style="left:1252px;top:109px;width:17px;height:68px;background:#2d2f30"></div>
<svg class="ic" style="left:1256px;top:65px" width="12" height="13" viewBox="0 0 12 13"><g fill="#b4b8ba"><ellipse cx="6" cy="3" rx="1.8" ry="1.8"/><ellipse cx="6" cy="6.4" rx="1.5" ry="1.7"/><ellipse cx="6" cy="10.3" rx="2.2" ry="2.6"/></g><path d="M0.5 2.5L3 5.8h6L11.5 2.5M0.5 7.2h11M1 12L3.5 8.5M11 12L8.500 8.5M4 0l1.2 1.6M8 0L6.8 1.6" stroke="#b4b8ba" stroke-width=".9" fill="none"/></svg>
<div class="a" style="left:1268px;top:82px;transform-origin:0 0;transform:rotate(90deg);font-size:11.300px;line-height:14px;height:14px;color:#bbbbbb">Ant</div>
<div class="a" style="left:1256px;top:114px;font-family:'Liberation Sans',sans-serif;font-weight:bold;font-style:italic;font-size:18px;line-height:18px;color:#d0d2d4;letter-spacing:-0.5px;-webkit-text-stroke:0.500px #d0d2d4">m</div>
<div class="a" style="left:1268px;top:135px;transform-origin:0 0;transform:rotate(90deg);font-size:10.900px;line-height:14px;height:14px;color:#c8c8c8">Maven</div>
<div class="a" style="left:14px;top:409px;width:1237px;height:1px;background:#323232"></div>
<div class="a" style="left:14px;top:410px;width:1237px;height:26px;background:#3c3f41"></div>
<div class="t" style="left:20px;top:414px;font-size:11.6px">Run:</div>
<div class="a" style="left:62px;top:413px;font-family:'Liberation Sans',sans-serif;font-weight:bold;font-style:italic;font-size:18px;line-height:18px;color:#43a0cc;letter-spacing:-0.5px;-webkit-text-stroke:0.500px #43a0cc">m</div>
<div class="a" style="left:74px;top:427.500px;width:4px;height:4px;border-radius:50%;background:#35c535"></div>
<div class="t" style="left:82px;top:414px;font-size:12.6px">myhome [compile]</div><svg class="ic" style="left:191px;top:420px" width="9" height="9" viewBox="0 0 9 9"><path d="M0.8 0.8L8.2 8.2M8.2 0.8L0.8 8.2" stroke="#7f8385" stroke-width="1" fill="none"/></svg>
<div class="a" style="left:50px;top:434px;width:160px;height:3px;background:#747a80;z-index:3"></div>
<svg class="ic" style="left:1205px;top:416px" width="14" height="14" viewBox="0 0 14 14"><g fill="#c3c6c8"><circle cx="7" cy="7" r="4.6"/><g><rect x="5.400" y="0.300" width="3.200" height="13.400" rx=".4"/></g><rect x="5.400" y="0.300" width="3.200" height="13.400" rx=".4" transform="rotate(60 7 7)"/><rect x="5.400" y="0.300" width="3.200" height="13.400" rx=".4" transform="rotate(120 7 7)"/></g><circle cx="7" cy="7" r="2.1" fill="#3c3f41"/></svg>
<div class="a" style="left:1232px;top:422px;width:12px;height:2px;background:#c3c6c8"></div>
<div class="a" style="left:14px;top:436px;width:28px;height:201px;background:#3c3f41"></div>
<div class="a" style="left:42px;top:436px;width:1px;height:201px;background:#47494b"></div>
<svg class="ic" style="left:20px;top:442px" width="18" height="18" viewBox="0 0 18 18"><path d="M9 15H7.500A5.500 5.500 0 0 1 7.500 4H10.500" stroke="#499c54" stroke-width="2.200" fill="none"/><path d="M9.500 0L15 4L9.500 8.200z" fill="#499c54"/><rect x="11" y="10.500" width="5.500" height="5.500" fill="#c3c6c8"/></svg>
<svg class="ic" style="left:20px;top:469px" width="17" height="15" viewBox="0 0 17 15"><path d="M0.500 5.500l6.500 4-6.500 4z" fill="#5c5f61"/><circle cx="11" cy="5.500" r="5" fill="#5c5f61"/><text x="8.300" y="9" font-family="Liberation Sans" font-weight="bold" font-size="8.500" fill="#3c3f41">9</text></svg>
<div class="a" style="left:18px;top:493px;width:20px;height:1px;background:#555759"></div>
<div class="a" style="left:23px;top:505px;width:11px;height:11px;background:#cf5551"></div>
<svg class="ic" style="left:20px;top:529px" width="19" height="16" viewBox="0 0 19 16"><path d="M1 7.500Q8 -0.500 15 7.500Q8 15.500 1 7.500z" stroke="#c3c6c8" stroke-width="1.600" fill="none"/><circle cx="8" cy="7.500" r="2.300" stroke="#c3c6c8" stroke-width="1.500" fill="none"/><path d="M13 12.500h5.500L15.700 15.500z" fill="#c3c6c8"/></svg>
<svg class="ic" style="left:21px;top:555px" width="15" height="14" viewBox="0 0 15 14"><path d="M0.500 3h3.200l1-2h5.600l1 2h3.200v10h-14z" fill="#c3c6c8"/><circle cx="7.500" cy="7.800" r="2.800" fill="#3c3f41"/><circle cx="7.500" cy="7.800" r="1.300" fill="#c3c6c8"/></svg>
<svg class="ic" style="left:20px;top:580px" width="18" height="17" viewBox="0 0 18 17"><g fill="#499c54"><ellipse cx="7" cy="8.500" rx="3.800" ry="4.800"/><path d="M4.200 3.500a2.800 2.500 0 0 1 5.600 0z"/><path d="M0.500 5h3v1.300h-3zM10.500 5h3v1.300h-3zM0 8h3.200v1.300H0zM0.500 11h3v1.300h-3zM3.700 0.500l1.600 2-0.900 0.700-1.600-2zM10.300 0.500l-1.600 2 0.900 0.700 1.600-2z"/></g><rect x="8" y="8" width="10" height="9" fill="#3c3f41"/><path d="M10 16L15.500 10.500" stroke="#c3c6c8" stroke-width="2"/><path d="M11.500 9.500h5.500V15z" fill="#c3c6c8"/></svg>
<div class="a" style="left:24px;top:617px;font-size:12px;color:#b4b8ba;line-height:20px">»</div>
<div class="a" style="left:43px;top:436px;width:398px;height:201px;background:#3c3f41"></div>
<div class="a" style="left:46px;top:443px;width:0;height:0;border-left:4.500px solid transparent;border-right:4.500px solid transparent;border-top:8px solid #c2c2c2"></div>
<svg class="ic" style="left:65px;top:442px" width="13" height="13" viewBox="0 0 13 13"><circle cx="6.500" cy="6.500" r="5.200" stroke="#b4b7b9" stroke-width="1.300" fill="none" stroke-dasharray="13.600 19.070" transform="rotate(-85 6.500 6.500)"/><circle cx="6.500" cy="6.500" r="5.200" stroke="#85888a" stroke-width="1.300" fill="none" stroke-dasharray="13.600 19.070" transform="rotate(100 6.500 6.500)"/></svg>
<div class="t" style="left:82px;top:438px;font-size:12.2px;font-weight:bold;color:#c8c8c8">myhome [compile]:</div>
<div class="t" style="right:832px;top:438px;font-size:11px;color:#6f7376">5 s</div>
<div class="a" style="left:64px;top:463px;width:0;height:0;border-left:4.500px solid transparent;border-right:4.500px solid transparent;border-top:8px solid #c2c2c2"></div>
<svg class="ic" style="left:83px;top:462px" width="13" height="13" viewBox="0 0 13 13"><circle cx="6.500" cy="6.500" r="5.200" stroke="#b4b7b9" stroke-width="1.300" fill="none" stroke-dasharray="13.600 19.070" transform="rotate(-85 6.500 6.500)"/><circle cx="6.500" cy="6.500" r="5.200" stroke="#85888a" stroke-width="1.300" fill="none" stroke-dasharray="13.600 19.070" transform="rotate(100 6.500 6.500)"/></svg>
<div class="t" style="left:100px;top:458px;font-size:11.950px">com.godcoder:myhome:jar:0.0.1-SNAPSHOT</div>
<div class="t" style="right:832px;top:458px;font-size:11px;color:#6f7376">4 s</div>
<svg class="ic" style="left:101px;top:482px" width="13" height="13" viewBox="0 0 13 13"><circle cx="6.500" cy="6.500" r="5.200" stroke="#b4b7b9" stroke-width="1.300" fill="none" stroke-dasharray="13.600 19.070" transform="rotate(-85 6.500 6.500)"/><circle cx="6.500" cy="6.500" r="5.200" stroke="#85888a" stroke-width="1.300" fill="none" stroke-dasharray="13.600 19.070" transform="rotate(100 6.500 6.500)"/></svg>
<div class="t" style="left:118px;top:478px;font-size:12.600px">compile</div>
<div class="t" style="right:832px;top:478px;font-size:11px;color:#6f7376">269 ms</div>
<div class="a" style="left:441px;top:436px;width:781px;height:201px;background:#2b2b2b;overflow:hidden">
<div class="t mono" style="left:12px;top:-13px;color:#bbbbbb">[INFO]</div>
<div class="t mono" style="left:12px;top:7px;color:#bbbbbb">[INFO] --- apt-maven-plugin:1.1.3:process (default) @ myhome ---</div>
<div class="t mono" style="left:12px;top:27px;color:#bbbbbb">[INFO]</div>
<div class="t mono" style="left:12px;top:47px;color:#bbbbbb">[INFO] --- maven-resources-plugin:3.1.0:resources (default-resources) @ myhome ---</div>
<div class="t mono" style="left:12px;top:67px;color:#bbbbbb">[INFO] Using 'UTF-8' encoding to copy filtered resources.</div>
<div class="t mono" style="left:12px;top:87px;color:#bbbbbb">[INFO] Copying 1 resource</div>
<div class="t mono" style="left:12px;top:107px;color:#bbbbbb">[INFO] Copying 8 resources</div>
<div class="t mono" style="left:12px;top:127px;color:#bbbbbb">[INFO]</div>
<div class="t mono" style="left:12px;top:147px;color:#bbbbbb">[INFO] --- maven-compiler-plugin:3.8.1:compile (default-compile) @ myhome ---</div>
<div class="a" style="left:12px;top:192px;width:90px;height:7px;background:#555759"></div>
<div class="a" style="left:773px;top:82px;width:8px;height:119px;background:#555759"></div>
</div>
<div class="a" style="left:1222px;top:436px;width:29px;height:201px;background:#3c3f41"></div>
<svg class="ic" style="left:1231px;top:446px" width="13" height="12" viewBox="0 0 15 13"><path d="M0.500 1.500h14M0.500 6h11a2.300 2.300 0 0 1 0 4.600H8.500M0.500 10.600h3.500" stroke="#c3c6c8" stroke-width="1.500" fill="none"/><path d="M9.300 8L6.300 10.600L9.300 13z" fill="#c3c6c8"/></svg>
<div class="a" style="left:1226px;top:467px;width:22px;height:22px;background:#5c6164;border-radius:2px"></div>
<svg class="ic" style="left:1231px;top:472px" width="13" height="12" viewBox="0 0 15 14"><path d="M0.500 3h5M0.500 7h5M0.500 12.500h14" stroke="#d0d3d5" stroke-width="1.500"/><path d="M10.500 0v6" stroke="#d0d3d5" stroke-width="1.600"/><path d="M7 5.500l3.500 4 3.500-4z" fill="#d0d3d5"/></svg>
<div class="a" style="left:1251px;top:409px;width:1px;height:228px;background:#353739"></div>
<div class="a" style="left:1222px;top:436px;width:29px;height:1px;background:#343638"></div>
<div class="a" style="left:0;top:637px;width:1269px;height:1px;background:#323232"></div>
<div class="a" style="left:0;top:638px;width:1269px;height:22px;background:#3c3f41"></div>
<div class="a" style="left:14px;top:638px;width:66px;height:22px;background:#2d2f30"></div>
<div class="a" style="left:25px;top:645px;width:0;height:0;border-top:5px solid transparent;border-bottom:5px solid transparent;border-left:8px solid #c3c6c8"></div>
<div class="a" style="left:31px;top:652px;width:4px;height:4px;border-radius:50%;background:#35c535"></div>
<div class="t" style="left:40px;top:639px;font-size:11.200px;color:#d0d0d0"><u>4</u>: Run</div>
<svg class="ic" style="left:91px;top:644px" width="12" height="12" viewBox="0 0 15 15"><g fill="#aeb2b4"><ellipse cx="7.500" cy="8.800" rx="4.300" ry="5.200"/><path d="M4.300 3.800a3.200 2.800 0 0 1 6.400 0z"/><path d="M0.600 4.800h3.600v1.900h-3.600zM10.800 4.800h3.600v1.900h-3.600zM0.200 8h3.600v1.900H0.200zM11.200 8h3.600v1.900h-3.600zM0.600 11.200h3.600v1.900h-3.600zM10.800 11.200h3.600v1.900h-3.600zM3.800 0.300l2 2.200-1.200 1-2-2.200zM11.200 0.300l-2 2.200 1.200 1 2-2.200z"/></g></svg>
<div class="t" style="left:108px;top:639px;font-size:11.200px;color:#bbbbbb"><u>5</u>: Debug</div>
<svg class="ic" style="left:175px;top:645px" width="11" height="10" viewBox="0 0 11 10"><path d="M0 1h2M3.500 1H11M0 5h2M3.500 5H11M0 9h2M3.500 9H11" stroke="#aeb2b4" stroke-width="1.700"/></svg>
<div class="t" style="left:191px;top:639px;font-size:11.200px;color:#bbbbbb"><u>6</u>: TODO</div>
<svg class="ic" style="left:255px;top:643px" width="12" height="13" viewBox="0 0 12 13"><path d="M2.500 0.500v12" stroke="#aeb2b4" stroke-width="2"/><path d="M2.500 8.500h3.500q2 0 2-2V4" stroke="#aeb2b4" stroke-width="1.800" fill="none"/><path d="M4.800 4.800L8 1L11.200 4.800z" fill="#aeb2b4"/></svg>
<div class="t" style="left:272px;top:639px;font-size:11.200px;color:#bbbbbb"><u>9</u>: Version Control</div>
<svg class="ic" style="left:385px;top:644px" width="12" height="11" viewBox="0 0 12 11"><rect width="12" height="11" rx="1" fill="#aeb2b4"/><path d="M2 2.500L5 5L2 7.500" stroke="#3c3f41" stroke-width="1.300" fill="none"/><path d="M5.500 8.500h4" stroke="#3c3f41" stroke-width="1.300"/></svg>
<div class="t" style="left:402px;top:639px;font-size:11.200px;color:#bbbbbb">Terminal</div>
<svg class="ic" style="left:462px;top:643px" width="14" height="14" viewBox="0 0 18 18"><path d="M1.800 7.800L9.400 3" stroke="#aeb2b4" stroke-width="3.600"/><path d="M6.200 5.200L15.300 14.300" stroke="#aeb2b4" stroke-width="2.800"/></svg>
<div class="t" style="left:480px;top:639px;font-size:11.200px;color:#bbbbbb">Build</div>
<svg class="ic" style="left:524px;top:645px" width="12" height="10" viewBox="0 0 12 10"><path d="M0 1h12M0 5h8M0 9h10" stroke="#aeb2b4" stroke-width="1.700"/></svg>
<div class="t" style="left:541px;top:639px;font-size:11.200px;color:#bbbbbb"><u>0</u>: Messages</div>
<svg class="ic" style="left:1174px;top:643px" width="14" height="14" viewBox="0 0 14 14"><path d="M7 1.200a5.500 5.500 0 1 0 0 11h5.500v-5.500a5.500 5.500 0 0 0-5.500-5.500z" stroke="#aeb2b4" stroke-width="1.400" fill="none"/></svg>
<div class="t" style="left:1192px;top:639px;font-size:10.900px;color:#bbbbbb">Event Log</div>
<div class="a" style="left:0;top:660px;width:1269px;height:19px;background:#3c3f41"></div>
<div class="a" style="left:0;top:664px;width:9px;height:9px;border:1px solid #9da0a2"></div><div class="a" style="left:0;top:674px;width:10px;height:1px;background:#9da0a2"></div>
<div class="t" style="left:19px;top:660px;font-size:12.300px">Build completed successfully in 2 s 345 ms (6 minutes ago)</div>
<div class="t" style="left:970px;top:660px;font-size:12.300px">12:14</div>
<div class="t" style="left:1011px;top:660px;font-size:12.300px">CRLF</div>
<div class="t" style="left:1050px;top:660px;font-size:12.300px">UTF-8</div>
<div class="t" style="left:1095px;top:660px;font-size:12.300px">4 spaces</div>
<div class="t" style="left:1154px;top:660px;font-size:12.300px">Git: master</div>
<svg class="ic" style="left:1224px;top:664px" width="12" height="12" viewBox="0 0 12 12"><rect x="3" y="5.500" width="8.500" height="6" fill="#c3c6c8"/><path d="M1 6V3.500a2.200 2.200 0 0 1 4.400 0V6" stroke="#c3c6c8" stroke-width="1.400" fill="none"/></svg>
<svg class="ic" style="left:1248px;top:663px" width="15" height="14" viewBox="0 0 15 14"><path d="M3.500 0.500h8l1 4.500h-10z" fill="#aeb2b4"/><rect x="0.500" y="5" width="14" height="1.600" fill="#aeb2b4"/><circle cx="5" cy="9" r="1.700" stroke="#aeb2b4" stroke-width="1" fill="none"/><circle cx="10" cy="9" r="1.700" stroke="#aeb2b4" stroke-width="1" fill="none"/><path d="M4 13.500l3.500-2 3.500 2z" fill="#aeb2b4"/></svg>
<div class="a" style="left:0;top:679px;width:1269px;height:38px;background:linear-gradient(90deg,#1b1b1b 0%,#1b1c19 20%,#1d1f19 40%,#1c1d19 60%,#1b1b1a 80%,#1b1b1b 100%)"></div>
<div class="a" style="left:43px;top:679px;width:49px;height:38px;background:#474747"></div>
<div class="a" style="left:43px;top:716px;width:49px;height:1px;background:#5f7486"></div>
<div class="a" style="left:97px;top:716px;width:42px;height:1px;background:#243746"></div>
<div class="a" style="left:247px;top:716px;width:42px;height:1px;background:#243746"></div>
<div class="a" style="left:297px;top:716px;width:42px;height:1px;background:#243746"></div>
<div class="a" style="left:347px;top:716px;width:42px;height:1px;background:#243746"></div>
<svg class="ic" style="left:8px;top:691px" width="17" height="17" viewBox="0 0 16 16"><path d="M0 2.200L6.600 1.300V7.600H0zM7.400 1.200L16 0V7.600H7.400zM0 8.400H6.600V14.700L0 13.800zM7.400 8.400H16V16L7.400 14.800z" fill="#fff"/></svg>
<svg class="ic" style="left:57px;top:689px" width="20" height="20" viewBox="0 0 15 15"><rect width="15" height="15" rx="1" fill="url(#ijg)"/><rect x="1.500" y="1.500" width="12" height="12" fill="#000"/><rect x="3.200" y="10.600" width="4.500" height="1" fill="#fff"/><text x="3" y="8" font-family="Liberation Sans" font-weight="bold" font-size="6.800" fill="#fff">IJ</text></svg>
<svg class="ic" style="left:104px;top:687px" width="27" height="25" viewBox="0 0 27 25"><path d="M19.500 0.500L26 3.500V21.500L19.500 24.500L8 14L3.500 17.500L1 16V9L3.500 7.500L8 11z" fill="#23a9f2"/><path d="M19.500 0.500L26 3.500V21.500L19.500 24.500z" fill="#0f7bc4"/><path d="M19.500 7L12 12.500L19.500 18z" fill="#1a1b18"/><path d="M3.200 10.500v4l2.500-2z" fill="#1a1b18"/></svg>
<svg class="ic" style="left:156px;top:688px" width="23" height="23" viewBox="0 0 24 24"><circle cx="12" cy="12" r="11.500" fill="#fbc116"/><path d="M12 12L2.040 6.250A11.500 11.500 0 0 1 21.960 6.250z" fill="#e33b2e"/><path d="M12 12L2.040 6.250A11.500 11.500 0 0 0 12 23.500l5-8.600z" fill="#2da94f"/><path d="M12 0.500A11.500 11.500 0 0 1 21.960 6.250H12z" fill="#e33b2e"/><circle cx="12" cy="12" r="5.300" fill="#fff"/><circle cx="12" cy="12" r="4.200" fill="#4285f4"/></svg>
<svg class="ic" style="left:206px;top:689px" width="23" height="20" viewBox="0 0 23 20"><path d="M0.500 1.500h7.500l2 2h12.500v3H0.500z" fill="#e8a822"/><rect x="0.500" y="4.500" width="22" height="14" rx="1" fill="#fcd462"/><rect x="4.500" y="11" width="14" height="8" fill="#2f8fe8"/><rect x="8" y="14.500" width="7" height="4.500" fill="#fcd462"/></svg>
<svg class="ic" style="left:256px;top:687px" width="23" height="24" viewBox="0 0 25 25"><circle cx="12.500" cy="12.500" r="11.200" fill="#1d1d20" stroke="#cfcfcf" stroke-width="1.700"/><g fill="none" stroke="#cfcfcf" stroke-width="2.200" stroke-linecap="round"><path d="M12.500 12.800Q10 9.500 10.500 6.500Q11.200 4.500 13 4"/><path d="M12.500 12.800Q16.500 12 19 13.800Q20.300 15.200 20 17"/><path d="M12.500 12.800Q11 16.500 8 18Q6 18.500 4.800 17.300"/></g></svg>
<svg class="ic" style="left:305px;top:687px" width="25" height="25" viewBox="0 0 25 25"><circle cx="12.500" cy="12.500" r="12" fill="#f26b3a"/><circle cx="12.500" cy="12.500" r="11.400" fill="none" stroke="#f9a184" stroke-width=".8"/><path d="M7 19L9.500 14L16 8L18.500 5.500L19.500 6.500L17.500 9.500L11 16z" fill="#fff"/></svg>
<svg class="ic" style="left:356px;top:688px" width="23" height="23" viewBox="0 0 23 23"><defs><linearGradient id="hsg" x1="0" y1="0" x2="0" y2="1"><stop offset="0" stop-color="#fff"/><stop offset=".7" stop-color="#f2f2f2"/><stop offset="1" stop-color="#9a9a9a"/></linearGradient><clipPath id="hsc"><circle cx="11.500" cy="11.500" r="11.300"/></clipPath></defs><circle cx="11.500" cy="11.500" r="11.300" fill="url(#hsg)"/><rect x="0" y="0" width="23" height="9" fill="#4caf32" clip-path="url(#hsc)"/><text x="11.500" y="16.300" text-anchor="middle" font-family="Liberation Sans" font-weight="bold" font-size="11" fill="#161616" letter-spacing="-0.600">HS</text></svg>
<div class="t" style="left:1209px;top:680px;font-size:12.500px;color:#ffffff;font-family:'Liberation Sans','NanumGothic',sans-serif">오후 2:38</div>
<div class="t" style="left:1203px;top:699px;font-size:12.500px;color:#ffffff">2021-08-16</div>
</body></html>
